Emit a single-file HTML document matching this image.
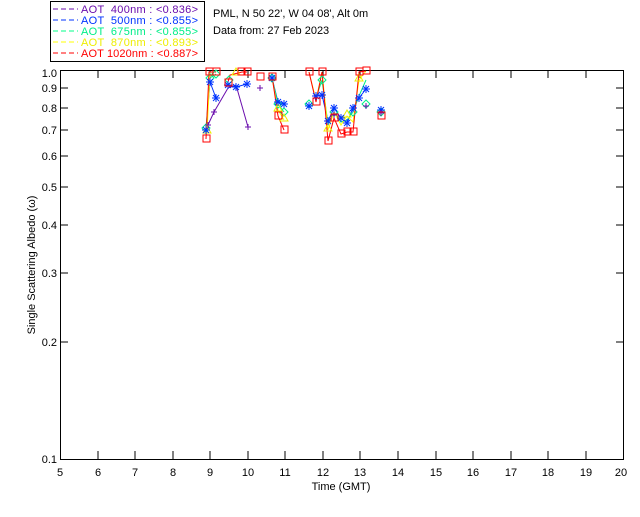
<!DOCTYPE html>
<html><head><style>
body{margin:0;background:#fff;width:640px;height:512px;overflow:hidden;font-family:"Liberation Sans",sans-serif}
svg text{font-family:"Liberation Sans",sans-serif;font-size:11px}
</style></head><body>
<svg width="640" height="512" xmlns="http://www.w3.org/2000/svg">
<defs>
<g id="ast" fill="none" stroke="#0033ff"><path d="M-4 0h8M0 -4v8M-3 -3l6 6M3 -3l-6 6"/></g>
<g id="dia" fill="none" stroke="#00ee88"><path d="M0 -4l4 4l-4 4l-4 -4z"/></g>
<g id="tri" fill="none" stroke="#eeee00"><path d="M0 -4l4 7h-8z"/></g>
</defs>
<rect x="50.5" y="1.5" width="154" height="60" fill="none" stroke="#000"/>
<g font-size="11">
<line x1="53" y1="9" x2="78" y2="9" stroke="#6a0dad" stroke-dasharray="5,3"/><text x="81" y="13" fill="#6a0dad" xml:space="preserve" textLength="117">AOT  400nm : &lt;0.836&gt;</text>
<line x1="53" y1="20" x2="78" y2="20" stroke="#0033ff" stroke-dasharray="5,3"/><text x="81" y="24" fill="#0033ff" xml:space="preserve" textLength="117">AOT  500nm : &lt;0.855&gt;</text>
<line x1="53" y1="31" x2="78" y2="31" stroke="#00ff88" stroke-dasharray="5,3"/><text x="81" y="35" fill="#00ee88" xml:space="preserve" textLength="117">AOT  675nm : &lt;0.855&gt;</text>
<line x1="53" y1="42" x2="78" y2="42" stroke="#ffff00" stroke-dasharray="5,3"/><text x="81" y="46" fill="#eeee00" xml:space="preserve" textLength="117">AOT  870nm : &lt;0.893&gt;</text>
<line x1="53" y1="53" x2="78" y2="53" stroke="#ff0000" stroke-dasharray="5,3"/><text x="81" y="57" fill="#ff0000" xml:space="preserve" textLength="117">AOT 1020nm : &lt;0.887&gt;</text>
</g>
<text x="213" y="17">PML, N 50 22', W 04 08', Alt 0m</text>
<text x="213" y="34">Data from: 27 Feb 2023</text>
<rect x="60.5" y="70.5" width="563" height="389" fill="none" stroke="#000"/>
<g stroke="#000">
<path d="M60 88h8M60 108h8M60 130h8M60 156h8M60 187h8M60 225h8M60 273h8M60 342h8M624 88h-8M624 108h-8M624 130h-8M624 156h-8M624 187h-8M624 225h-8M624 273h-8M624 342h-8"/>
<path d="M98 459v-8M135 459v-8M173 459v-8M210 459v-8M248 459v-8M285 459v-8M323 459v-8M360 459v-8M398 459v-8M436 459v-8M473 459v-8M511 459v-8M548 459v-8M586 459v-8M98 70v8M135 70v8M173 70v8M210 70v8M248 70v8M285 70v8M323 70v8M360 70v8M398 70v8M436 70v8M473 70v8M511 70v8M548 70v8M586 70v8"/>
</g>
<g text-anchor="end">
<text x="57" y="77">1.0</text><text x="57" y="92">0.9</text><text x="57" y="112">0.8</text><text x="57" y="134">0.7</text><text x="57" y="160">0.6</text><text x="57" y="191">0.5</text><text x="57" y="229">0.4</text><text x="57" y="277">0.3</text><text x="57" y="346">0.2</text><text x="57" y="463">0.1</text>
</g>
<g text-anchor="middle">
<text x="60" y="476">5</text><text x="98" y="476">6</text><text x="135" y="476">7</text><text x="173" y="476">8</text><text x="210" y="476">9</text><text x="248" y="476">10</text><text x="285" y="476">11</text><text x="323" y="476">12</text><text x="360" y="476">13</text><text x="398" y="476">14</text><text x="436" y="476">15</text><text x="473" y="476">16</text><text x="511" y="476">17</text><text x="548" y="476">18</text><text x="586" y="476">19</text><text x="621" y="476">20</text>
<text x="341" y="490">Time (GMT)</text>
<text transform="translate(35,265) rotate(-90)">Single Scattering Albedo (ω)</text>
</g>
<polyline fill="none" stroke="#6a0dad" points="208,125 214,112 228,88 236,85 248,127"/>
<polyline fill="none" stroke="#0033ff" points="206,130 210,82 216,98"/>
<polyline fill="none" stroke="#0033ff" points="228,85 236,87 247,84"/>
<polyline fill="none" stroke="#0033ff" points="272,78 278,102 284,104"/>
<polyline fill="none" stroke="#0033ff" points="316,96 322,95 328,121 334,108 341,118 347,123 353,108 359,98 366,89"/>
<polyline fill="none" stroke="#00ee88" points="206,128 210,78 216,74"/>
<polyline fill="none" stroke="#00ee88" points="272,78 278,104 284,112"/>
<polyline fill="none" stroke="#00ee88" points="316,98 322,80 328,124 334,112 341,122 347,120 353,112 359,96 366,80"/>
<polyline fill="none" stroke="#ffff00" points="207,132 210,72 216,72"/>
<polyline fill="none" stroke="#ffff00" points="272,78 278,110 284,120"/>
<polyline fill="none" stroke="#ffff00" points="309,72 316,100 322,72 328,130 334,112 341,125 347,116 353,122 359,80 366,71"/>
<polyline fill="none" stroke="#ff0000" points="206,139 209,72 216,72"/>
<polyline fill="none" stroke="#ff0000" points="228,82 230,75 242,72 247,72"/>
<polyline fill="none" stroke="#ff0000" points="272,76 278,116 284,130"/>
<polyline fill="none" stroke="#ff0000" points="309,72 316,102 322,72 328,141 334,118 341,134 347,132 353,132 359,72 366,71"/>
<g>
<use href="#dia" x="206" y="128"/><use href="#dia" x="210" y="78"/><use href="#dia" x="216" y="74"/><use href="#dia" x="229" y="80"/><use href="#dia" x="272" y="78"/><use href="#dia" x="278" y="104"/><use href="#dia" x="284" y="112"/><use href="#dia" x="309" y="104"/><use href="#dia" x="322" y="80"/><use href="#dia" x="334" y="112"/><use href="#dia" x="353" y="112"/><use href="#dia" x="366" y="104"/><use href="#dia" x="381" y="112"/>
<use href="#tri" x="207" y="130"/><use href="#tri" x="236" y="72"/><use href="#tri" x="278" y="108"/><use href="#tri" x="284" y="118"/><use href="#tri" x="328" y="128"/><use href="#tri" x="347" y="114"/><use href="#tri" x="359" y="78"/>
<use href="#ast" x="206" y="130"/><use href="#ast" x="210" y="82"/><use href="#ast" x="216" y="98"/><use href="#ast" x="228" y="85"/><use href="#ast" x="236" y="87"/><use href="#ast" x="247" y="84"/><use href="#ast" x="272" y="78"/><use href="#ast" x="278" y="102"/><use href="#ast" x="284" y="104"/><use href="#ast" x="309" y="106"/><use href="#ast" x="316" y="96"/><use href="#ast" x="322" y="95"/><use href="#ast" x="328" y="121"/><use href="#ast" x="334" y="108"/><use href="#ast" x="341" y="118"/><use href="#ast" x="347" y="123"/><use href="#ast" x="353" y="108"/><use href="#ast" x="359" y="98"/><use href="#ast" x="366" y="89"/><use href="#ast" x="381" y="110"/>
</g>
<g fill="none" stroke="#6a0dad">
<path d="M205 125h6M208 122v6M211 112h6M214 109v6M245 127h6M248 124v6M257 88h6M260 85v6M331 115h6M334 112v6M363 106h6M366 103v6M378 113h6M381 110v6"/>
</g>
<g fill="none" stroke="#ff0000">
<rect x="203" y="135" width="7" height="7"/><rect x="206" y="68" width="7" height="7"/><rect x="213" y="68" width="7" height="7"/><rect x="225" y="79" width="7" height="7"/><rect x="238" y="68" width="7" height="7"/><rect x="244" y="68" width="7" height="7"/><rect x="257" y="73" width="7" height="7"/><rect x="269" y="73" width="7" height="7"/><rect x="275" y="112" width="7" height="7"/><rect x="281" y="126" width="7" height="7"/><rect x="306" y="68" width="7" height="7"/><rect x="313" y="98" width="7" height="7"/><rect x="319" y="68" width="7" height="7"/><rect x="325" y="137" width="7" height="7"/><rect x="331" y="114" width="7" height="7"/><rect x="338" y="130" width="7" height="7"/><rect x="344" y="128" width="7" height="7"/><rect x="350" y="128" width="7" height="7"/><rect x="356" y="68" width="7" height="7"/><rect x="363" y="67" width="7" height="7"/><rect x="378" y="112" width="7" height="7"/>
</g>
</svg>
</body></html>
